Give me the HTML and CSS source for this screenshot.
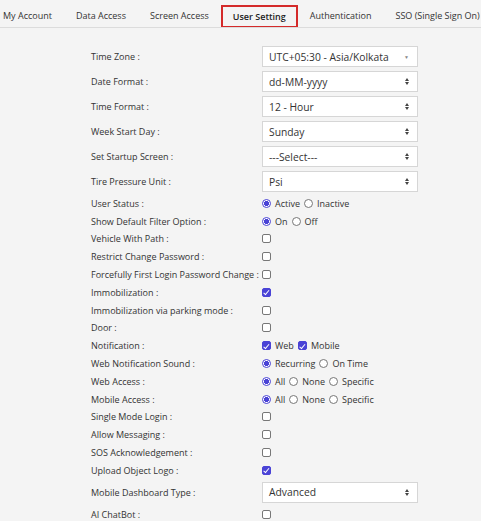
FILE: index.html
```html
<!DOCTYPE html>
<html>
<head>
<meta charset="utf-8">
<link rel="stylesheet" href="styles.css">
</head>
<body>
<div class="tabbar">
  <div class="tabs">
    <div class="tab">My Account</div>
    <div class="tab">Data Access</div>
    <div class="tab">Screen Access</div>
    <div class="tab active">User Setting</div>
    <div class="tab">Authentication</div>
    <div class="tab">SSO (Single Sign On)</div>
  </div>
</div>
<div class="form">
  <div class="row sel"><div class="label">Time Zone :</div><div class="value"><div class="select">UTC+05:30 - Asia/Kolkata<span class="caret">&#9660;</span></div></div></div>
  <div class="row sel"><div class="label">Date Format :</div><div class="value"><div class="select">dd-MM-yyyy<span class="updown"><i class="up"></i><i class="dn"></i></span></div></div></div>
  <div class="row sel"><div class="label">Time Format :</div><div class="value"><div class="select">12 - Hour<span class="updown"><i class="up"></i><i class="dn"></i></span></div></div></div>
  <div class="row sel"><div class="label">Week Start Day :</div><div class="value"><div class="select">Sunday<span class="updown"><i class="up"></i><i class="dn"></i></span></div></div></div>
  <div class="row sel"><div class="label">Set Startup Screen :</div><div class="value"><div class="select">---Select---<span class="updown"><i class="up"></i><i class="dn"></i></span></div></div></div>
  <div class="row sel"><div class="label">Tire Pressure Unit :</div><div class="value"><div class="select">Psi<span class="updown"><i class="up"></i><i class="dn"></i></span></div></div></div>
  <div class="row"><div class="label">User Status :</div><div class="value"><span class="radio on"></span><span class="opt">Active</span><span class="radio"></span><span class="opt">Inactive</span></div></div>
  <div class="row"><div class="label">Show Default Filter Option :</div><div class="value"><span class="radio on"></span><span class="opt">On</span><span class="radio"></span><span class="opt">Off</span></div></div>
  <div class="row"><div class="label">Vehicle With Path :</div><div class="value"><span class="cb"></span></div></div>
  <div class="row"><div class="label">Restrict Change Password :</div><div class="value"><span class="cb"></span></div></div>
  <div class="row"><div class="label">Forcefully First Login Password Change :</div><div class="value"><span class="cb"></span></div></div>
  <div class="row"><div class="label">Immobilization :</div><div class="value"><span class="cb on"></span></div></div>
  <div class="row"><div class="label">Immobilization via parking mode :</div><div class="value"><span class="cb"></span></div></div>
  <div class="row"><div class="label">Door :</div><div class="value"><span class="cb"></span></div></div>
  <div class="row"><div class="label">Notification :</div><div class="value"><span class="cb on"></span><span class="opt">Web</span><span class="cb on"></span><span class="opt">Mobile</span></div></div>
  <div class="row"><div class="label">Web Notification Sound :</div><div class="value"><span class="radio on"></span><span class="opt">Recurring</span><span class="radio"></span><span class="opt">On Time</span></div></div>
  <div class="row"><div class="label">Web Access :</div><div class="value"><span class="radio on"></span><span class="opt">All</span><span class="radio"></span><span class="opt">None</span><span class="radio"></span><span class="opt">Specific</span></div></div>
  <div class="row"><div class="label">Mobile Access :</div><div class="value"><span class="radio on"></span><span class="opt">All</span><span class="radio"></span><span class="opt">None</span><span class="radio"></span><span class="opt">Specific</span></div></div>
  <div class="row"><div class="label">Single Mode Login :</div><div class="value"><span class="cb"></span></div></div>
  <div class="row"><div class="label">Allow Messaging :</div><div class="value"><span class="cb"></span></div></div>
  <div class="row"><div class="label">SOS Acknowledgement :</div><div class="value"><span class="cb"></span></div></div>
  <div class="row"><div class="label">Upload Object Logo :</div><div class="value"><span class="cb on"></span></div></div>
  <div class="row sel"><div class="label">Mobile Dashboard Type :</div><div class="value"><div class="select">Advanced<span class="updown"><i class="up"></i><i class="dn"></i></span></div></div></div>
  <div class="row"><div class="label">AI ChatBot :</div><div class="value"><span class="cb"></span></div></div>
</div>
</body>
</html>
```

FILE: styles.css
```css
html, body {
  margin: 0;
  padding: 0;
  background: #f4f4f4;
  font-family: "Open Sans", "Noto Sans", sans-serif;
  font-size: 9px;
  color: #333;
  overflow: hidden;
}
.tabbar {
  height: 27px;
  border-bottom: 1px solid #dcdcdc;
  overflow: hidden;
  display: flex;
  align-items: flex-end;
}
.tabs {
  display: flex;
  margin-left: -9px;
  white-space: nowrap;
}
.tab {
  height: 22px;
  line-height: 21px;
  padding: 0 12px;
  box-sizing: border-box;
  color: #333;
}
.tab.active {
  border: 2px solid #d42a2a;
  border-bottom-width: 1px;
  font-weight: 600;
  color: #222;
  line-height: 19px;
  padding: 0 10px 0 10px;
}
.form {
  padding-top: 16px;
  padding-left: 91px;
}
.row {
  display: flex;
  align-items: center;
  height: 17.8px;
  white-space: nowrap;
}
.row.sel {
  height: 25px;
}
.row.sel + .row:not(.sel) {
  margin-top: 0.5px;
}
.row:not(.sel) + .row.sel {
  margin-top: 0.5px;
}
.label {
  width: 171px;
  flex: none;
}
.value {
  display: flex;
  align-items: center;
}
.select {
  width: 156px;
  height: 21px;
  box-sizing: border-box;
  background: #fff;
  border: 1px solid #d6d6d6;
  padding: 0 9px 0 6px;
  display: flex;
  align-items: center;
  justify-content: space-between;
  font-size: 10.3px;
  color: #333;
}
.caret {
  font-size: 5px;
  color: #888;
  margin-right: -1px;
}
.updown {
  display: flex;
  flex-direction: column;
  gap: 1px;
  margin-right: -1px;
}
.updown i {
  display: block;
  width: 0;
  height: 0;
  border-left: 2.5px solid transparent;
  border-right: 2.5px solid transparent;
}
.updown .up { border-bottom: 3px solid #444; }
.updown .dn { border-top: 3px solid #444; }
.radio {
  width: 9px;
  height: 9px;
  box-sizing: border-box;
  border-radius: 50%;
  border: 1px solid #777;
  background: #fff;
  margin-right: 4px;
  flex: none;
}
.radio.on {
  border: 1.5px solid #4a43d6;
  background: radial-gradient(circle, #4a43d6 0 2.3px, #fff 2.8px);
}
.opt {
  margin-right: 4px;
}
.cb {
  width: 9px;
  height: 9px;
  box-sizing: border-box;
  border: 1px solid #777;
  border-radius: 2px;
  background: #fff;
  margin-right: 4px;
  flex: none;
  position: relative;
}
.cb.on {
  background: #4a43d6;
  border-color: #4a43d6;
}
.cb.on::after {
  content: "";
  position: absolute;
  left: 2.3px;
  top: 0.3px;
  width: 2px;
  height: 4.5px;
  border-right: 1.3px solid #fff;
  border-bottom: 1.3px solid #fff;
  transform: rotate(40deg);
}
```
